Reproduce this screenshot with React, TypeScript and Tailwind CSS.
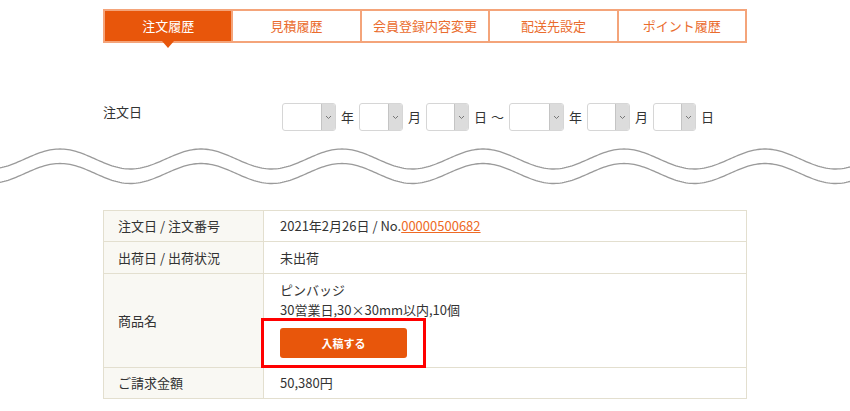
import React from "react"

const tabs = ["注文履歴", "見積履歴", "会員登録内容変更", "配送先設定", "ポイント履歴"]

function wavePath(mid: number) {
  const pts: string[] = []
  for (let x = 0; x <= 850; x += 2) {
    const y = mid - 10 * Math.cos((2 * Math.PI * (x - 60)) / 141)
    pts.push(`${x === 0 ? "M" : "L"}${x},${y.toFixed(2)}`)
  }
  return pts.join(" ")
}

function FakeSelect({ w }: { w: string }) {
  return (
    <div className={`flex h-[28px] ${w} overflow-hidden rounded-[3px] border border-[#d6d6d6] bg-white`}>
      <div className="flex-1" />
      <div className="flex w-[14px] items-center justify-center border-l border-[#c4c4c4] bg-[#dcdcdc]">
        <svg width="7" height="5" viewBox="0 0 7 5">
          <path d="M1,1 L3.5,3.5 L6,1" fill="none" stroke="#777" strokeWidth="1" />
        </svg>
      </div>
    </div>
  )
}

export default function App() {
  return (
    <div
      className="min-h-[411px] w-[850px] bg-white text-[13px] text-[#333]"
      style={{ fontFamily: '"Noto Sans CJK JP", "Noto Sans", sans-serif' }}
    >
      <div className="mx-auto w-[644px] pt-[9px]">
        <div className="flex border-2 border-[#f4a47a]">
          {tabs.map((t, i) => (
            <div
              key={t}
              className={`relative flex h-[30px] flex-1 items-center justify-center ${
                i === 0 ? "bg-[#e8560b] text-white" : "border-l-2 border-[#f4a47a] text-[#ea6c2e]"
              }`}
            >
              {t}
              {i === 0 && (
                <div className="absolute left-1/2 top-[30px] h-0 w-0 -translate-x-1/2 border-x-[6px] border-t-[7px] border-x-transparent border-t-[#e8560b]" />
              )}
            </div>
          ))}
        </div>

        <div className="mt-[60px] flex items-start">
          <div className="w-[179px] leading-[18px]">注文日</div>
          <div className="flex items-center gap-[4px]">
            <FakeSelect w="w-[54px]" />
            <span className="mx-[1px]">年</span>
            <FakeSelect w="w-[44px]" />
            <span className="mx-[1px]">月</span>
            <FakeSelect w="w-[43px]" />
            <span className="mx-[1px]">
              日<span className="ml-[4px]">〜</span>
            </span>
            <FakeSelect w="w-[55px]" />
            <span className="mx-[1px]">年</span>
            <FakeSelect w="w-[43px]" />
            <span className="mx-[1px]">月</span>
            <FakeSelect w="w-[43px]" />
            <span className="mx-[1px]">日</span>
          </div>
        </div>
      </div>

      <svg className="mt-[13px] block" width="850" height="45" viewBox="0 0 850 45">
        <path d={wavePath(15)} fill="none" stroke="#9a9a9a" strokeWidth="1.3" />
        <path d={wavePath(29.5)} fill="none" stroke="#9a9a9a" strokeWidth="1.3" />
      </svg>

      <div className="mx-auto mt-[21px] w-[644px]">
        <table className="w-full border-collapse border border-[#e3dfcf]">
          <tbody>
            <tr className="h-[31px]">
              <td className="w-[160px] border border-[#e3dfcf] bg-[#f9f8f3] px-[14px]">注文日 / 注文番号</td>
              <td className="border border-[#e3dfcf] px-[16px]">
                2021年2月26日 / No.<span className="text-[#ee6a25] underline">00000500682</span>
              </td>
            </tr>
            <tr className="h-[32px]">
              <td className="border border-[#e3dfcf] bg-[#f9f8f3] px-[14px]">出荷日 / 出荷状況</td>
              <td className="border border-[#e3dfcf] px-[16px]">未出荷</td>
            </tr>
            <tr className="h-[93px]">
              <td className="border border-[#e3dfcf] bg-[#f9f8f3] px-[14px]">商品名</td>
              <td className="border border-[#e3dfcf] px-[16px] pb-[9px] pt-[6px] align-top">
                <div className="leading-[20px]">ピンバッジ</div>
                <div className="leading-[20px]">30営業日,30×30mm以内,10個</div>
                <div className="relative mt-[8px] w-[127px]">
                  <button className="flex h-[30px] w-[127px] items-center justify-center rounded-[3px] bg-[#e8560b] text-[11px] font-bold text-white">
                    入稿する
                  </button>
                  <div className="absolute left-[-19px] top-[-10px] h-[50px] w-[165px] border-[3px] border-[#ff0000]" />
                </div>
              </td>
            </tr>
            <tr className="h-[31px]">
              <td className="border border-[#e3dfcf] bg-[#f9f8f3] px-[14px]">ご請求金額</td>
              <td className="border border-[#e3dfcf] px-[16px]">50,380円</td>
            </tr>
          </tbody>
        </table>
      </div>
    </div>
  )
}
